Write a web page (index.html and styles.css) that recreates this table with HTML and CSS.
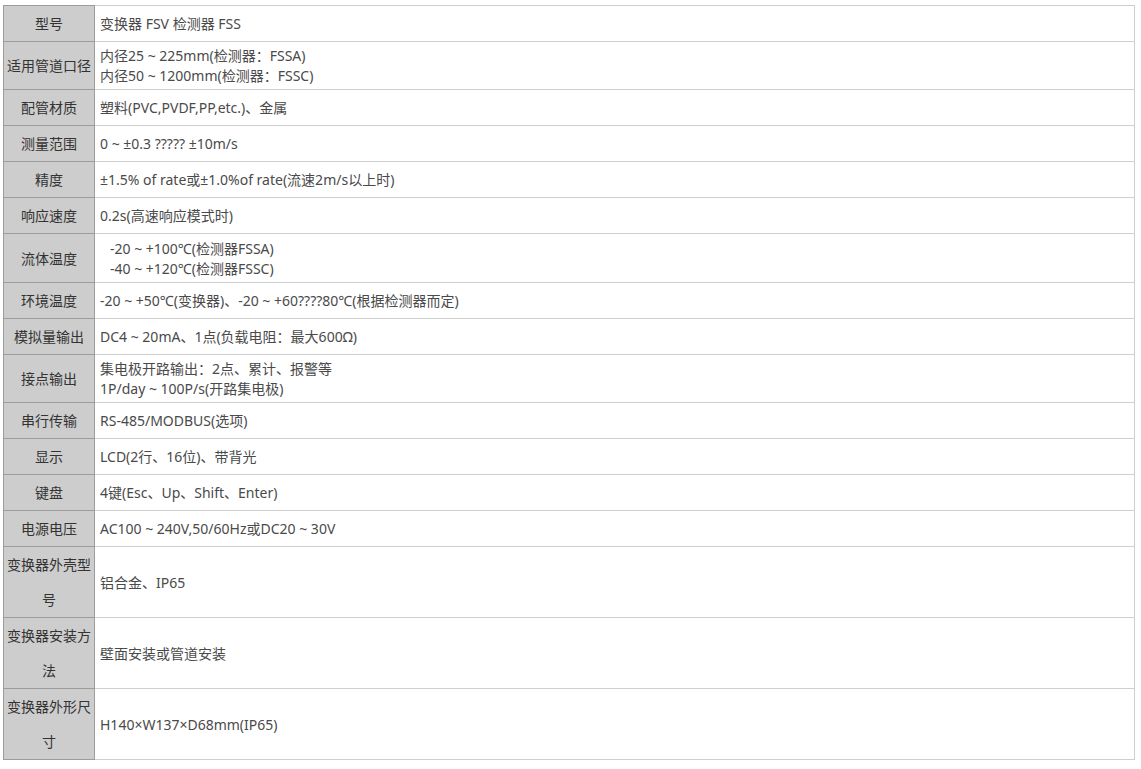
FILE: index.html
```html
<!DOCTYPE html>
<html lang="zh-CN">
<head>
  <meta charset="UTF-8">
  <meta name="viewport" content="width=device-width, initial-scale=1.0">
  <title>FSV 规格</title>
  <link rel="stylesheet" href="styles.css">
</head>
<body>
  <table class="spec-table">
    <tbody>
      <tr><th>型号</th><td>变换器 FSV 检测器 FSS</td></tr>
      <tr><th>适用管道口径</th><td>内径25 ~ 225mm(检测器：FSSA)<br>内径50 ~ 1200mm(检测器：FSSC)</td></tr>
      <tr><th>配管材质</th><td>塑料(PVC,PVDF,PP,etc.)、金属</td></tr>
      <tr><th>测量范围</th><td>0 ~ ±0.3 ????? ±10m/s</td></tr>
      <tr><th>精度</th><td>±1.5% of rate或±1.0%of rate(流速2m/s以上时)</td></tr>
      <tr><th>响应速度</th><td>0.2s(高速响应模式时)</td></tr>
      <tr class="tall"><th>流体温度</th><td class="indent">-20 ~ +100℃(检测器FSSA)<br>-40 ~ +120℃(检测器FSSC)</td></tr>
      <tr><th>环境温度</th><td>-20 ~ +50℃(变换器)、-20 ~ +60????80℃(根据检测器而定)</td></tr>
      <tr><th>模拟量输出</th><td>DC4 ~ 20mA、1点(负载电阻：最大600Ω)</td></tr>
      <tr><th>接点输出</th><td>集电极开路输出：2点、累计、报警等<br>1P/day ~ 100P/s(开路集电极)</td></tr>
      <tr><th>串行传输</th><td>RS-485/MODBUS(选项)</td></tr>
      <tr><th>显示</th><td>LCD(2行、16位)、带背光</td></tr>
      <tr><th>键盘</th><td>4键(Esc、Up、Shift、Enter)</td></tr>
      <tr><th>电源电压</th><td>AC100 ~ 240V,50/60Hz或DC20 ~ 30V</td></tr>
      <tr><th>变换器外壳型号</th><td>铝合金、IP65</td></tr>
      <tr><th>变换器安装方法</th><td>壁面安装或管道安装</td></tr>
      <tr><th>变换器外形尺寸</th><td>H140×W137×D68mm(IP65)</td></tr>
    </tbody>
  </table>
</body>
</html>
```

FILE: styles.css
```css
body {
  margin: 0;
  background-color: #fff;
  font-family: "Noto Sans", "Noto Sans CJK SC", sans-serif;
  font-size: 14px;
}
.spec-table {
  margin: 5px 0 0 3px;
  width: 1132px;
  border-collapse: collapse;
  table-layout: fixed;
}
.spec-table th {
  width: 84px;
  padding: 0 3px;
  line-height: 35px;
  background-color: #cdcdcd;
  border: 1px solid #9c9c9c;
  color: #333;
  font-weight: normal;
  text-align: center;
  vertical-align: middle;
}
.spec-table td {
  padding: 4px 5px 3px;
  line-height: 20px;
  border: 1px solid #cfcfcf;
  color: #4a4a4a;
  text-align: left;
  vertical-align: middle;
}
.spec-table tr.tall td {
  padding-top: 5px;
}
.spec-table td.indent {
  padding-left: 15px;
}
```
